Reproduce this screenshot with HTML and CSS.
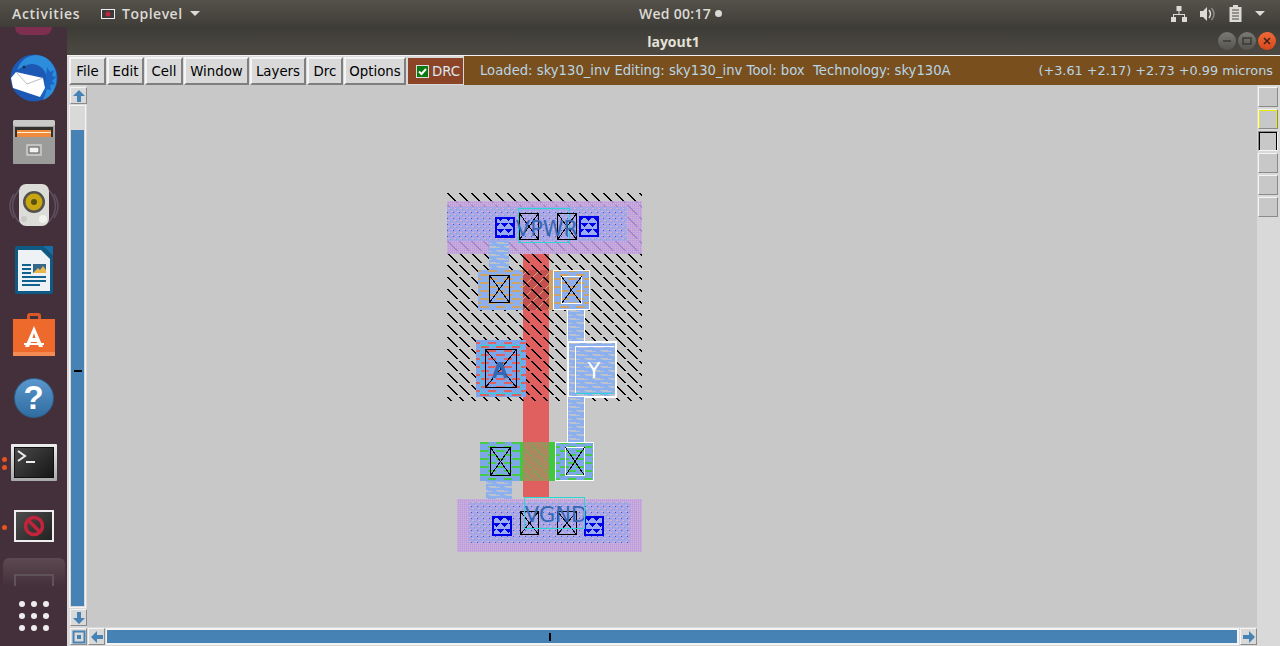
FILE: index.html
```html
<!DOCTYPE html>
<html lang="en">
<head>
    <meta charset="UTF-8">
    <title>layout1</title>
    <link rel="stylesheet" href="styles.css">
</head>
<body>

<header class="topbar">
    <div class="topbar-left">
        <span class="activities">Activities</span>
        <span class="app-menu">
            <svg class="app-icon" width="14" height="10" viewBox="0 0 14 10"><rect x=".5" y=".5" width="13" height="9" fill="#3a3a3a" stroke="#eee"/><circle cx="7" cy="5" r="2.5" fill="#c2243c"/></svg>
            <span class="app-name">Toplevel</span>
            <i class="caret"></i>
        </span>
    </div>
    <div class="clock">Wed 00:17 <i class="clock-dot"></i></div>
    <div class="tray">
        <svg width="16" height="16" viewBox="0 0 16 16" fill="#dcdad4"><rect x="5.500" y="0" width="5" height="5"/><rect x="0" y="11" width="5" height="5"/><rect x="11" y="11" width="5" height="5"/><path d="M7.500 5h1v3H14v3h-1V9H3v2H2V8h5.500z"/></svg>
        <svg width="16" height="16" viewBox="0 0 16 16" fill="#dcdad4"><path d="M0 5h3l4-4v14l-4-4H0z"/><path d="M9 4q3 4 0 8" fill="none" stroke="#dcdad4" stroke-width="1.500"/><path d="M11.500 2q5 6 0 12" fill="none" stroke="#8d8b85" stroke-width="1.500"/></svg>
        <svg width="13" height="17" viewBox="0 0 13 17"><path d="M4 0h5v2h3.500v15H.5V2H4z" fill="#dcdad4"/><path d="M3 5h7M3 8h7M3 11h7M3 14h7" stroke="#4a4842" stroke-width="1.200"/></svg>
        <i class="caret"></i>
    </div>
</header>

<div class="desktop">
    <nav class="dock">
        <div class="dock-cut"></div>

        <div class="dock-item">
            <svg width="50" height="50" viewBox="0 0 50 50">
                <circle cx="25" cy="25" r="23.500" fill="#1c58b4"/>
                <path d="M8 17Q13 3 27 2q15 1 20 17 2 11-3 20-3 5-10 8l3-8 1-9q1-9-5-15Q26 9 18 12q-5 2-10 5z" fill="#2c8ddc"/>
                <path d="M38 14l3 5 4-2-2 6 4 1-4 4 3 3-5 1 1 5-5-1-2 8-3 1 3-9 2-12z" fill="#1b64c4"/>
                <path d="M2 25l5-6 27 6 2 10-5 9-27-9z" fill="#fff"/>
                <path d="M7 19l11 12 16-6" fill="none" stroke="#b8bec6" stroke-width="1"/>
                <circle cx="15" cy="14" r="1.500" fill="#12325e"/>
            </svg>
        </div>
        <div class="dock-item">
            <svg width="44" height="44" viewBox="0 0 44 44">
                <rect x="1" y="0" width="42" height="44" rx="2" fill="#a3a3a1"/>
                <rect x="1" y="0" width="42" height="6" rx="2" fill="#c9c9c7"/>
                <rect x="3" y="7" width="38" height="11" fill="#33302c"/>
                <rect x="5" y="10" width="34" height="8" fill="#f08a3c"/>
                <rect x="5" y="12" width="34" height="1" fill="#fff0d0"/>
                <rect x="1" y="17" width="42" height="27" rx="1" fill="#9b9b99"/>
                <rect x="14" y="24" width="16" height="12" rx="1" fill="#c3c3c1"/>
                <rect x="17" y="27" width="10" height="6" fill="#f3f3f1" stroke="#55534f"/>
            </svg>
        </div>
        <div class="dock-item">
            <svg width="50" height="44" viewBox="0 0 50 44">
                <path d="M10 6Q-3 22 10 38M5 10Q-3 22 5 34M40 6q13 16 0 32M45 10q8 12 0 24" fill="none" stroke="#5e5060" stroke-width="1.500"/>
                <rect x="10" y="0" width="30" height="42" rx="7" fill="#dcdcd8"/>
                <circle cx="25" cy="18" r="11" fill="#55524c"/>
                <circle cx="25" cy="18" r="8.500" fill="#c8a612"/>
                <circle cx="25" cy="18" r="3" fill="#57500f"/>
                <circle cx="34" cy="35" r="4" fill="#f2f2ee"/>
                <circle cx="15" cy="35" r="3" fill="#c9c9c5"/>
            </svg>
        </div>
        <div class="dock-item">
            <svg width="40" height="48" viewBox="0 0 40 48">
                <path d="M1 2a2 2 0 0 1 2-2h26l10 11v35a2 2 0 0 1-2 2H3a2 2 0 0 1-2-2z" fill="#0f5a85"/>
                <path d="M4 4h23l9 9v32H4z" fill="#eef2f4"/>
                <path d="M29 0h10v10z" fill="#136fa8"/>
                <rect x="8" y="18" width="9" height="2" fill="#12618f"/><rect x="8" y="22" width="9" height="2" fill="#12618f"/><rect x="8" y="26" width="9" height="2" fill="#12618f"/>
                <rect x="19" y="18" width="13" height="9" fill="#35688a"/>
                <path d="M19 27l5-5 2 2 3-4 3 4v3z" fill="#e8b850"/>
                <rect x="8" y="30" width="24" height="2" fill="#12618f"/><rect x="8" y="34" width="24" height="2" fill="#12618f"/><rect x="8" y="38" width="18" height="2" fill="#12618f"/>
            </svg>
        </div>
        <div class="dock-item">
            <svg width="42" height="44" viewBox="0 0 42 44">
                <path d="M14 9V4q0-3 3-3h8q3 0 3 3v5h-3V4h-8v5z" fill="#d8582a"/>
                <rect x="0" y="7" width="42" height="37" fill="#ee6a2c"/>
                <rect x="0" y="40" width="42" height="4" fill="#f58a52"/>
                <path d="M21 14l-9 21h4l2-5h6l2 5h4zM19.500 26l1.500-5 1.500 5z" fill="#fff"/>
                <rect x="11" y="31" width="20" height="2" fill="#fff"/>
            </svg>
        </div>
        <div class="dock-item">
            <div class="help-icon">?</div>
        </div>
        <div class="dock-item">
            <i class="run-dot run-dot-a"></i><i class="run-dot run-dot-b"></i>
            <div class="term-icon">
                <svg width="38" height="29" viewBox="0 0 38 29"><path d="M3 3l7 5-7 5" fill="none" stroke="#eee" stroke-width="2"/><rect x="11" y="13" width="9" height="2" fill="#eee"/></svg>
            </div>
        </div>
        <div class="dock-item">
            <i class="run-dot run-dot-c"></i>
            <div class="block-icon">
                <svg width="22" height="22" viewBox="0 0 22 22"><circle cx="11" cy="11" r="8.500" fill="none" stroke="#c2243c" stroke-width="3.500"/><path d="M5 5l12 12" stroke="#c2243c" stroke-width="3.500"/></svg>
            </div>
        </div>
        <div class="dock-tile"><i></i></div>
        <div class="dots">
            <i></i><i></i><i></i><i></i><i></i><i></i><i></i><i></i><i></i>
        </div>
    </nav>

    <main class="window">
        <div class="titlebar">
            <span class="title">layout1</span>
            <div class="win-btns">
                <span class="win-btn"><svg width="10" height="10" viewBox="0 0 10 10"><path d="M1 5h8" stroke="#3a3a36" stroke-width="1.500"/></svg></span>
                <span class="win-btn"><svg width="10" height="10" viewBox="0 0 10 10"><rect x="1" y="2" width="8" height="6" fill="none" stroke="#3a3a36" stroke-width="1.500"/></svg></span>
                <span class="win-btn win-close"><svg width="10" height="10" viewBox="0 0 10 10"><path d="M2 2l6 6M8 2l-6 6" stroke="#3a2418" stroke-width="1.500"/></svg></span>
            </div>
        </div>

        <div class="toolbar">
            <button class="menu-btn btn-file">File</button>
            <button class="menu-btn btn-edit">Edit</button>
            <button class="menu-btn btn-cell">Cell</button>
            <button class="menu-btn btn-window">Window</button>
            <button class="menu-btn btn-layers">Layers</button>
            <button class="menu-btn btn-drc">Drc</button>
            <button class="menu-btn btn-options">Options</button>
            <div class="drc-check">
                <span class="check-box"><svg width="11" height="11" viewBox="0 0 11 11"><path d="M2 5.500l2.500 2.500L9 3" fill="none" stroke="#fff" stroke-width="2"/></svg></span>
                DRC
            </div>
            <div class="status">
                <span class="status-left">Loaded: sky130_inv Editing: sky130_inv Tool: box&nbsp; Technology: sky130A</span>
                <span class="status-right">(+3.61 +2.17) +2.73 +0.99 microns</span>
            </div>
        </div>

        <div class="work">
            <div class="vscroll">
                <span class="arrow-btn v-arrow"><svg width="14" height="14" viewBox="0 0 14 14"><path d="M7 1l6 6H9v6H5V7H1z" fill="#4682b4"/></svg></span>
                <div class="v-trough">
                    <div class="v-thumb"></div>
                    <div class="v-fill"><i class="v-tick"></i></div>
                </div>
                <span class="arrow-btn v-arrow"><svg width="14" height="14" viewBox="0 0 14 14"><path d="M7 13L1 7h4V1h4v6h4z" fill="#4682b4"/></svg></span>
            </div>

            <div class="canvas">
                <svg class="layout" width="1170" height="542" viewBox="87 85 1170 542" shape-rendering="crispEdges">
                    <defs>
                        <path id="stair" d="M0 0h2v1h1v1h1v1h1v1h1v1h1v1h1v1h1v1h1v1h1v1H9V9H8V8H7V7H6V6H5V5H4V4H3V3H2V2H1V1H0z"/>
                        <pattern id="hatch" width="12" height="12" patternUnits="userSpaceOnUse" x="447" y="193">
                            <use href="#stair" fill="#000"/>
                        </pattern>
                        <pattern id="hatch-rail" width="12" height="12" patternUnits="userSpaceOnUse" x="447" y="193">
                            <use href="#stair" fill="#a487c8"/>
                        </pattern>
                        <pattern id="hatch-tan" width="12" height="12" patternUnits="userSpaceOnUse" x="447" y="193">
                            <path d="M12 2L2 12" stroke="#dba878" stroke-width="1" fill="none"/>
                        </pattern>
                        <pattern id="hatch-green" width="12" height="12" patternUnits="userSpaceOnUse" x="447" y="193">
                            <path d="M1 0L12 11" stroke="#50c050" stroke-width="1" fill="none"/>
                        </pattern>
                        <pattern id="dither" width="2" height="2" patternUnits="userSpaceOnUse">
                            <rect width="2" height="2" fill="#c6a4dc"/>
                            <rect width="1" height="1" fill="#b79bdc"/>
                            <rect x="1" y="1" width="1" height="1" fill="#cdb2dc"/>
                        </pattern>
                        <pattern id="li-dots" width="6" height="6" patternUnits="userSpaceOnUse">
                            <rect width="6" height="6" fill="#a6a6ea"/>
                            <rect x="1" y="1" width="2" height="1" fill="#d8b4cc"/>
                            <rect x="4" y="4" width="2" height="1" fill="#d8b4cc"/>
                            <rect x="3" y="2" width="1" height="1" fill="#5a54b0"/>
                            <rect y="5" width="1" height="1" fill="#78b8a0"/>
                        </pattern>
                        <pattern id="li-grey" width="16" height="8" patternUnits="userSpaceOnUse">
                            <rect width="16" height="8" fill="#8cb0ee"/>
                            <rect x="0" y="2" width="8" height="1" fill="#bcc2ce"/>
                            <rect x="2" y="3" width="10" height="1" fill="#bcc2ce"/>
                            <rect x="8" y="6" width="8" height="1" fill="#bcc2ce"/>
                            <rect x="10" y="7" width="6" height="1" fill="#bcc2ce"/>
                            <rect x="0" y="7" width="4" height="1" fill="#bcc2ce"/>
                        </pattern>
                        <pattern id="li-tan" width="16" height="8" patternUnits="userSpaceOnUse">
                            <rect width="16" height="8" fill="#8cb0ee"/>
                            <rect x="0" y="2" width="9" height="2" fill="#cfa268"/>
                            <rect x="8" y="6" width="8" height="2" fill="#cfa268"/>
                            <rect x="0" y="6" width="1" height="2" fill="#cfa268"/>
                        </pattern>
                        <pattern id="li-green" width="16" height="8" patternUnits="userSpaceOnUse">
                            <rect width="16" height="8" fill="#7ca8e8"/>
                            <rect x="0" y="2" width="9" height="2" fill="#48cc48"/>
                            <rect x="8" y="6" width="8" height="2" fill="#48cc48"/>
                        </pattern>
                        <pattern id="li-red" width="16" height="8" patternUnits="userSpaceOnUse">
                            <rect width="16" height="8" fill="#7aa4ec"/>
                            <rect x="0" y="2" width="9" height="2" fill="#e06060"/>
                            <rect x="8" y="6" width="8" height="2" fill="#e06060"/>
                        </pattern>
                        <pattern id="via" width="8" height="12" patternUnits="userSpaceOnUse">
                            <rect width="8" height="12" fill="#9cacf0"/>
                            <path d="M0 1h8L4 5z" fill="#0000e8"/>
                            <path d="M-4 7h8L0 11zM4 7h8L8 11z" fill="#0000e8"/>
                        </pattern>
                    </defs>

                    <!-- poly under everything -->
                    <rect x="523" y="251" width="26" height="246" fill="#e06060"/>

                    <!-- nwell -->
                    <rect x="447" y="193" width="195" height="208" fill="url(#hatch)"/>

                    <!-- VPWR rail -->
                    <rect x="447" y="201" width="195" height="53" fill="url(#dither)"/>
                    <rect x="447" y="201" width="195" height="53" fill="url(#hatch-rail)"/>
                    <rect x="447" y="207" width="180" height="34" fill="url(#li-dots)"/>
                    <rect x="489" y="241" width="20" height="29" fill="url(#li-grey)"/>
                    <rect x="496" y="218" width="18" height="19" fill="url(#via)" stroke="#0000e8" stroke-width="2"/>
                    <rect x="580" y="217" width="18" height="19" fill="url(#via)" stroke="#0000e8" stroke-width="2"/>
                    <rect x="518.500" y="208.500" width="51" height="34" class="cyan-box"/>
                    <g class="black-box">
                        <rect x="519.500" y="213.500" width="19" height="26"/>
                        <path d="M519.500 213.500l19 26M538.500 213.500l-19 26"/>
                        <rect x="557.500" y="213.500" width="19" height="26"/>
                        <path d="M557.500 213.500l19 26M576.500 213.500l-19 26"/>
                    </g>
                    <text class="label" x="547" y="236">VPWR</text>

                    <!-- top contacts -->
                    <rect x="478" y="270" width="45" height="40" fill="url(#li-tan)"/>
                    <rect x="523" y="270" width="26" height="40" fill="#c44f4f"/>
                    <rect x="523" y="270" width="26" height="40" fill="url(#hatch-tan)"/>
                    <rect x="523" y="270" width="26" height="40" fill="url(#hatch)"/>
                    <rect x="549" y="270" width="4" height="40" fill="#cfa268"/>
                    <rect x="553" y="270" width="37" height="40" fill="url(#li-tan)"/>
                    <g class="black-box">
                        <rect x="489.500" y="275.500" width="20" height="27"/>
                        <path d="M489.500 275.500l20 27M509.500 275.500l-20 27"/>
                    </g>
                    <rect x="553.500" y="270.500" width="36" height="39" class="white-box"/>
                    <rect x="561.500" y="276.500" width="20" height="27" class="white-box"/>
                    <path class="black-line" d="M561.500 276.500l20 27M581.500 276.500l-20 27"/>

                    <!-- A pin -->
                    <rect x="476" y="340" width="50" height="57" fill="url(#li-red)"/>
                    <rect x="480.500" y="345.500" width="40" height="48" class="cyan-box"/>
                    <g class="black-box">
                        <rect x="485.500" y="349.500" width="31" height="38"/>
                        <path d="M485.500 349.500l31 38M516.500 349.500l-31 38"/>
                    </g>
                    <text class="label label-small" x="500" y="378">A</text>

                    <!-- Y pin -->
                    <rect x="568" y="310" width="16" height="31" fill="url(#li-grey)"/>
                    <path class="white-box" d="M567.500 310v31M584.500 310v31"/>
                    <rect x="568" y="342" width="47" height="55" fill="url(#li-grey)"/>
                    <rect x="567.500" y="341.500" width="48" height="55" class="white-box wide"/>
                    <path class="white-box" d="M575.500 393v-47h38"/>
                    <path class="cyan-box" d="M575 393.500h38"/>
                    <text class="label label-pin" x="594" y="378">Y</text>

                    <!-- below Y, to the n contact -->
                    <rect x="568" y="397" width="16" height="46" fill="url(#li-grey)"/>
                    <path class="white-box" d="M567.500 397v46M584.500 397v46"/>

                    <!-- bottom contacts -->
                    <rect x="480" y="442" width="40" height="39" fill="url(#li-green)"/>
                    <rect x="520" y="442" width="35" height="39" fill="#40c840"/>
                    <rect x="523" y="442" width="26" height="39" fill="#aa8860"/>
                    <rect x="523" y="442" width="26" height="39" fill="url(#hatch-green)"/>
                    <rect x="555" y="442" width="39" height="39" fill="url(#li-green)"/>
                    <g class="black-box">
                        <rect x="490.500" y="447.500" width="20" height="28"/>
                        <path d="M490.500 447.500l20 28M510.500 447.500l-20 28"/>
                    </g>
                    <rect x="555.500" y="442.500" width="38" height="38" class="white-box"/>
                    <rect x="565.500" y="447.500" width="19" height="28" class="white-box"/>
                    <path class="black-line" d="M565.500 447.500l19 28M584.500 447.500l-19 28"/>
                    <rect x="486" y="481" width="26" height="20" fill="url(#li-grey)"/>

                    <!-- VGND rail -->
                    <rect x="457" y="499" width="185" height="53" fill="url(#dither)"/>
                    <rect x="469" y="502" width="161" height="41" fill="url(#li-dots)"/>
                    <rect x="493" y="517" width="18" height="18" fill="url(#via)" stroke="#0000e8" stroke-width="2"/>
                    <rect x="585" y="517" width="18" height="18" fill="url(#via)" stroke="#0000e8" stroke-width="2"/>
                    <g class="black-box">
                        <rect x="520.500" y="511.500" width="18" height="23"/>
                        <path d="M520.500 511.500l18 23M538.500 511.500l-18 23"/>
                        <rect x="557.500" y="511.500" width="19" height="23"/>
                        <path d="M557.500 511.500l19 23M576.500 511.500l-19 23"/>
                    </g>
                    <text class="label" x="556" y="522">VGND</text>
                    <rect x="524.500" y="497.500" width="60" height="31" class="cyan-box"/>
                </svg>
            </div>

            <aside class="side">
                <span class="side-box"></span>
                <span class="side-box side-yellow"></span>
                <span class="side-box side-black"></span>
                <span class="side-box"></span>
                <span class="side-box"></span>
                <span class="side-box"></span>
            </aside>

            <div class="hscroll-row">
                <span class="arrow-btn corner"><svg width="14" height="14" viewBox="0 0 14 14"><rect x="1.500" y="1.500" width="11" height="11" fill="none" stroke="#4682b4" stroke-width="2"/><rect x="5" y="5" width="4" height="4" fill="#4682b4"/></svg></span>
                <span class="arrow-btn"><svg width="14" height="14" viewBox="0 0 14 14"><path d="M1 7l6-6v4h6v4H7v4z" fill="#4682b4"/></svg></span>
                <div class="h-trough"><i class="h-tick"></i></div>
                <span class="arrow-btn"><svg width="14" height="14" viewBox="0 0 14 14"><path d="M13 7L7 1v4H1v4h6v4z" fill="#4682b4"/></svg></span>
            </div>
        </div>
    </main>
</div>

</body>
</html>
```

FILE: styles.css
```css
* {
    box-sizing: border-box;
}

html,
body {
    height: 100%;
}

body {
    margin: 0;
    overflow: hidden;
    display: flex;
    flex-direction: column;
    font-family: "DejaVu Sans", sans-serif;
    background-color: #44303a;
}

i {
    display: block;
}

/* gnome top bar */
.topbar {
    height: 27px;
    flex: none;
    display: grid;
    grid-template-columns: 1fr auto 1fr;
    align-items: center;
    background: linear-gradient(#55524b, #3f3d37);
    color: #dcdad4;
    font-family: "Open Sans", sans-serif;
    font-size: 14px;
    font-weight: 600;
}

.topbar-left {
    display: flex;
    align-items: center;
    padding-left: 12px;
}

.activities {
    width: 89px;
    letter-spacing: .7px;
}

.app-menu {
    display: flex;
    align-items: center;
    gap: 7px;
}

.app-name {
    letter-spacing: .5px;
}

.caret {
    width: 0;
    height: 0;
    border-left: 5px solid transparent;
    border-right: 5px solid transparent;
    border-top: 5px solid #dcdad4;
}

.clock {
    display: flex;
    align-items: center;
    gap: 4px;
    padding-left: 81px;
    letter-spacing: .3px;
}

.clock-dot {
    width: 7px;
    height: 7px;
    border-radius: 50%;
    background-color: #dcdad4;
}

.tray {
    display: flex;
    align-items: center;
    justify-content: flex-end;
    gap: 13px;
    padding-right: 15px;
}

.desktop {
    flex: 1;
    display: flex;
    min-height: 0;
}

/* launcher */
.dock {
    width: 67px;
    flex: none;
    display: flex;
    flex-direction: column;
    align-items: center;
    background-color: #44303a;
    overflow: hidden;
}

.dock-cut {
    width: 37px;
    height: 8px;
    margin-bottom: 11px;
    border-radius: 0 0 19px 19px;
    background-color: #7e2f50;
}

.dock-item {
    position: relative;
    width: 67px;
    height: 64px;
    flex: none;
    display: flex;
    align-items: center;
    justify-content: center;
}

.help-icon {
    width: 40px;
    height: 40px;
    border-radius: 50%;
    background: linear-gradient(#5b97cc, #2f6ca0);
    border: 1px solid #2b6290;
    color: #fff;
    font-family: "Liberation Sans", sans-serif;
    font-size: 33px;
    font-weight: 700;
    line-height: 38px;
    text-align: center;
}

.term-icon {
    width: 46px;
    height: 37px;
    padding: 3px;
    background: linear-gradient(#eeeeee, #a9a9a9);
    border-radius: 1px;
}

.term-icon svg {
    display: block;
    width: 40px;
    height: 31px;
    background: linear-gradient(135deg, #4a4a4a, #161616);
    border: 1px solid #111;
}

.block-icon {
    width: 40px;
    height: 32px;
    display: flex;
    align-items: center;
    justify-content: center;
    border: 2px solid #eee;
    background: linear-gradient(135deg, #4d4d4d, #222);
}

.run-dot {
    position: absolute;
    left: 2px;
    width: 5px;
    height: 5px;
    border-radius: 50%;
    background-color: #e95420;
}

.run-dot-a {
    top: 27px;
}

.run-dot-b {
    top: 35px;
}

.run-dot-c {
    top: 31px;
}

.dock-tile {
    width: 62px;
    height: 28px;
    flex: none;
    padding: 16px 11px 0;
    border-radius: 6px 6px 0 0;
    background: linear-gradient(#5c4a52, #44303a);
}

.dock-tile i {
    height: 12px;
    border: 2px solid #5f5258;
    border-bottom: 0;
}

.dots {
    margin-top: 15px;
    width: 30px;
    display: grid;
    grid-template-columns: repeat(3, 6px);
    gap: 6px;
    justify-content: space-between;
}

.dots i {
    width: 6px;
    height: 6px;
    border-radius: 50%;
    background-color: #eeeeee;
}

/* magic window */
.window {
    flex: 1;
    display: flex;
    flex-direction: column;
    min-width: 0;
    background-color: #d9d9d9;
}

.titlebar {
    height: 28px;
    flex: none;
    display: flex;
    align-items: center;
    justify-content: center;
    position: relative;
    background: linear-gradient(#3e3c36, #4b4942);
}

.title {
    color: #e4e1d9;
    font-family: "Open Sans", sans-serif;
    font-size: 14px;
    font-weight: 700;
}

.win-btns {
    position: absolute;
    right: 4px;
    top: 5px;
    display: flex;
    gap: 2px;
}

.win-btn {
    width: 18px;
    height: 18px;
    display: flex;
    align-items: center;
    justify-content: center;
    border-radius: 50%;
    background: linear-gradient(#7c7a74, #55534d);
}

.win-close {
    background: linear-gradient(#f0693a, #d6481a);
}

.toolbar {
    height: 30px;
    flex: none;
    display: flex;
    padding-left: 2px;
    border-top: 1px solid #f2f2f2;
    background-color: #d9d9d9;
    font-size: 13.330px;
}

.menu-btn {
    height: 28px;
    margin: 1px 1px 0 0;
    padding: 0;
    font: inherit;
    color: #000;
    background-color: #d9d9d9;
    border: 2px solid;
    border-color: #f4f4f4 #7f7f7f #7f7f7f #f4f4f4;
}

.btn-file {
    width: 37px;
}

.btn-edit {
    width: 37px;
}

.btn-cell {
    width: 38px;
}

.btn-window {
    width: 65px;
}

.btn-layers {
    width: 56px;
}

.btn-drc {
    width: 36px;
}

.btn-options {
    width: 62px;
}

.drc-check {
    width: 57px;
    height: 28px;
    margin-top: 1px;
    display: flex;
    align-items: center;
    gap: 4px;
    padding-left: 9px;
    border: 1px solid #d9d9d9;
    background-color: #8b4426;
    color: #dbe7ee;
}

.check-box {
    width: 11px;
    height: 11px;
    display: block;
    background-color: #0a7a12;
    outline: 1px solid #ddd;
}

.check-box svg {
    display: block;
}

.status {
    flex: 1;
    display: flex;
    align-items: center;
    justify-content: space-between;
    padding: 0 7px 0 16px;
    background-color: #7a4f1e;
    color: #b7d6e6;
}

.status-left {
    white-space: nowrap;
    font-size: 13.200px;
}

.status-right {
    font-size: 12.850px;
}

.work {
    flex: 1;
    display: grid;
    grid-template-columns: 20px 1fr 23px;
    grid-template-rows: 1fr 19px;
    min-height: 0;
}

.arrow-btn {
    width: 17px;
    height: 17px;
    flex: none;
    display: flex;
    align-items: center;
    justify-content: center;
    background-color: #d9d9d9;
    border: 1px solid;
    border-color: #f4f4f4 #8a8a8a #8a8a8a #f4f4f4;
}

.vscroll {
    display: flex;
    flex-direction: column;
    align-items: flex-start;
    gap: 1px;
    padding: 2px 0 1px 2px;
}

.v-arrow {
    margin-left: 1px;
}

.v-trough {
    width: 17px;
    flex: 1;
    display: flex;
    flex-direction: column;
    border: 1px solid #f4f4f4;
    padding: 1px;
}

.v-thumb {
    height: 23px;
    background-color: #d9d9d9;
}

.v-fill {
    flex: 1;
    display: flex;
    align-items: center;
    justify-content: center;
    padding-top: 6px;
    background-color: #4682b4;
}

.v-tick {
    width: 8px;
    height: 2px;
    background-color: #000;
}

.canvas {
    background-color: #c8c8c8;
    overflow: hidden;
}

.layout {
    display: block;
}

.cyan-box {
    fill: none;
    stroke: #2cd4d4;
    stroke-width: 1;
}

.white-box {
    fill: none;
    stroke: #fff;
    stroke-width: 1;
}

.wide {
    stroke-width: 2;
}

.black-box {
    fill: none;
    stroke: #000;
    stroke-width: 1.500;
}

.black-box path {
    stroke-width: 1;
}

.black-line {
    fill: none;
    stroke: #000;
    stroke-width: 1;
}

.label {
    fill: #3468b4;
    font-family: "DejaVu Sans", sans-serif;
    font-size: 21px;
    text-anchor: middle;
    shape-rendering: auto;
}

.label-small {
    font-weight: 700;
}

.label-pin {
    fill: #fff;
}

.side {
    grid-row: 1 / 3;
    grid-column: 3;
    display: flex;
    flex-direction: column;
    gap: 2px;
    padding: 2px 2px 0 1px;
}

.side-box {
    height: 20px;
    flex: none;
    background-color: #c8c8c8;
    border: 1px solid;
    border-color: #f4f4f4 #8a8a8a #8a8a8a #f4f4f4;
}

.side-yellow {
    box-shadow: inset 1px 1px 0 #e8e800, inset -1px 0 0 #e8e800;
}

.side-black {
    border-color: #8a8a8a #f4f4f4 #f4f4f4 #8a8a8a;
    box-shadow: inset 1px 1px 0 #000, inset -1px 0 0 #000;
}

.hscroll-row {
    grid-column: 1 / 3;
    display: flex;
    align-items: center;
    gap: 1px;
    padding-left: 3px;
}

.h-trough {
    flex: 1;
    height: 17px;
    display: flex;
    align-items: center;
    padding-left: 442px;
    background-color: #4682b4;
    border: 2px solid #f4f4f4;
    border-left-width: 1px;
}

.h-tick {
    width: 2px;
    height: 8px;
    background-color: #000;
}
```
